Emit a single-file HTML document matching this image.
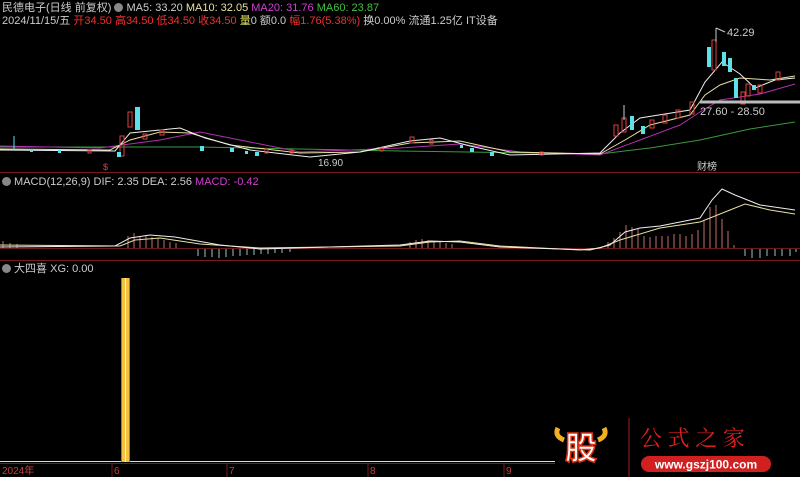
<!DOCTYPE html>
<html><head><meta charset="utf-8"><style>
body{margin:0;background:#000;width:800px;height:477px;overflow:hidden;font-family:"Liberation Sans","Noto Sans CJK SC",sans-serif;}
.t{position:absolute;font-size:11px;white-space:nowrap;color:#ccc;line-height:12px}
</style></head><body>
<div class="t" style="left:2px;top:2px">民德电子(日线 前复权) <span style="display:inline-block;width:9px;height:9px;border-radius:50%;background:#888;vertical-align:-1px"></span> MA5: 33.20 <span style="color:#e8e0a0">MA10: 32.05</span> <span style="color:#d040d0">MA20: 31.76</span> <span style="color:#40c040">MA60: 23.87</span></div>
<div class="t" style="left:2px;top:15px">2024/11/15/五 <span style="color:#f03030">开34.50 高34.50 低34.50 收34.50</span> <span style="color:#e0e060">量</span>0 额0.0 <span style="color:#f03030">幅1.76(5.38%)</span> 换0.00% 流通1.25亿 IT设备</div>
<div class="t" style="left:2px;top:176px"><span style="display:inline-block;width:9px;height:9px;border-radius:50%;background:#888;vertical-align:-1px"></span> MACD(12,26,9) DIF: 2.35 DEA: 2.56 <span style="color:#d040d0">MACD: -0.42</span></div>
<div class="t" style="left:2px;top:263px"><span style="display:inline-block;width:9px;height:9px;border-radius:50%;background:#888;vertical-align:-1px"></span> 大四喜 XG: 0.00</div>
<svg width="800" height="477" style="position:absolute;left:0;top:0">
<line x1="0" y1="172.5" x2="800" y2="172.5" stroke="#7a1a1a"/>
<line x1="0" y1="260.5" x2="800" y2="260.5" stroke="#7a1a1a"/>
<line x1="0" y1="463.5" x2="555" y2="463.5" stroke="#7a1a1a"/>
<line x1="0" y1="461.5" x2="555" y2="461.5" stroke="#ddd"/>
<polyline fill="none" stroke="#3a9a3a" stroke-width="1" points="0,147 200,147 400,151 600,154 650,148 700,140 750,129 795,122"/>
<polyline fill="none" stroke="#b030b0" stroke-width="1" points="0,146 100,148 160,140 200,132 250,142 300,152 400,148 460,144 520,152 600,155 640,140 680,125 700,112 720,100 760,94 795,84"/>
<polyline fill="none" stroke="#e8e0a0" stroke-width="1" points="0,149 110,150 130,140 160,132 190,133 230,145 300,153 360,152 410,143 460,141 510,152 600,154 625,140 650,125 690,115 705,95 720,85 740,78 770,80 795,76"/>
<polyline fill="none" stroke="#eee" stroke-width="1" points="0,150 115,151 130,133 160,130 180,128 205,138 250,150 310,157 360,152 410,141 440,138 470,146 510,155 600,153 620,133 640,118 665,114 690,110 705,82 722,62 740,74 755,88 775,80 795,78"/>
<g stroke="#e04040" fill="none">
<rect x="120" y="136" width="4" height="20"/><rect x="128" y="112" width="4" height="15"/><rect x="614" y="125" width="4" height="11"/><rect x="622" y="118" width="4" height="14"/><rect x="650" y="120" width="4" height="8"/><rect x="663" y="115" width="4" height="8"/><rect x="676" y="110" width="4" height="8"/><rect x="690" y="102" width="4" height="12"/><rect x="712" y="40" width="4" height="30"/><rect x="741" y="92" width="4" height="12"/><rect x="746" y="84" width="4" height="12"/><rect x="758" y="85" width="4" height="8"/><rect x="776" y="72" width="4" height="8"/><rect x="143" y="134" width="4" height="5"/><rect x="160" y="130" width="4" height="5"/><rect x="410" y="137" width="4" height="6"/>
<rect x="88" y="150" width="3" height="3"/><rect x="265" y="149" width="3" height="4"/><rect x="290" y="150" width="3" height="3"/><rect x="380" y="148" width="3" height="3"/><rect x="430" y="140" width="3" height="4"/><rect x="540" y="152" width="3" height="3"/>
</g>
<g fill="#5ee0e8">
<rect x="135" y="107" width="5" height="23"/><rect x="630" y="116" width="4" height="14"/><rect x="641" y="126" width="4" height="8"/><rect x="707" y="47" width="4" height="20"/><rect x="722" y="52" width="4" height="14"/><rect x="728" y="58" width="4" height="14"/><rect x="734" y="78" width="4" height="20"/><rect x="752" y="85" width="4" height="5"/><rect x="117" y="152" width="4" height="5"/><rect x="200" y="146" width="4" height="5"/><rect x="230" y="148" width="4" height="4"/><rect x="255" y="152" width="4" height="4"/><rect x="470" y="148" width="4" height="4"/><rect x="490" y="152" width="4" height="4"/>
<rect x="30" y="149" width="3" height="3"/><rect x="58" y="150" width="3" height="3"/><rect x="245" y="151" width="3" height="3"/><rect x="460" y="145" width="3" height="3"/>
</g>
<line x1="14" y1="136" x2="14" y2="150" stroke="#5ee0e8"/>
<line x1="624" y1="105" x2="624" y2="120" stroke="#ccc"/>
<line x1="716" y1="28" x2="716" y2="42" stroke="#ccc"/>
<line x1="716" y1="28" x2="725" y2="32" stroke="#ccc"/>
<text x="727" y="36" fill="#ccc" font-size="11" font-family="Liberation Sans">42.29</text>
<line x1="700" y1="102" x2="800" y2="102" stroke="#bbb" stroke-width="3"/>
<text x="700" y="115" fill="#ccc" font-size="11" font-family="Liberation Sans">27.60 - 28.50</text>
<text x="318" y="166" fill="#ccc" font-size="10" font-family="Liberation Sans">16.90</text>
<text x="697" y="170" fill="#ccc" font-size="10" font-family="Noto Sans CJK SC">财榜</text>
<text x="103" y="170" fill="#e04040" font-size="9" font-family="Liberation Sans">$</text>
<line x1="0" y1="248.5" x2="800" y2="248.5" stroke="#6a1a1a"/>
<g stroke="#c07070">
<path d="M3 248V241M10 248V243M17 248V244M128 248V236M134 248V233M140 248V236M146 248V235M152 248V237M158 248V238M164 248V240M170 248V242M176 248V243M410 248V242M416 248V240M422 248V239M428 248V240M434 248V241M440 248V242M446 248V243M452 248V244M608 248V242M614 248V238M620 248V232M626 248V225M632 248V227M638 248V229M644 248V236M650 248V237M656 248V236M662 248V236M668 248V236M674 248V234M680 248V234M686 248V236M692 248V234M698 248V230M704 248V220M710 248V207M716 248V205M722 248V219M728 248V231M734 248V245"/>
</g>
<g stroke="#8fc8c8">
<path d="M198 249V256M205 249V257M212 249V257M219 249V258M226 249V257M233 249V256M240 249V256M247 249V255M254 249V255M261 249V254M268 249V254M275 249V253M282 249V253M290 249V252M745 249V256M752 249V258M760 249V258M767 249V256M775 249V256M782 249V256M790 249V256M796 249V252"/>
</g>
<polyline fill="none" stroke="#e8e0a0" points="0,245 120,246 135,240 160,238 200,244 260,248 400,246 430,242 460,241 500,246 580,250 600,248 620,240 660,228 700,222 730,210 745,204 770,210 795,214"/>
<polyline fill="none" stroke="#eee" points="0,247 115,246 130,238 150,235 175,237 220,245 260,249 400,245 430,241 460,242 500,247 590,250 610,245 625,232 640,228 660,226 690,220 700,218 712,200 722,189 735,195 760,205 795,210"/>
<rect x="121" y="278" width="9" height="184" fill="#f2c240"/>
<line x1="121.5" y1="278" x2="121.5" y2="462" stroke="#b07a10"/>
<line x1="129.5" y1="278" x2="129.5" y2="462" stroke="#b07a10"/>
<line x1="125.5" y1="278" x2="125.5" y2="462" stroke="#fff6b0"/>
<g fill="#c04040" font-size="10" font-family="Liberation Sans,Noto Sans CJK SC">
<text x="2" y="474">2024年</text><text x="114" y="474">6</text><text x="229" y="474">7</text><text x="370" y="474">8</text><text x="506" y="474">9</text>
</g>
<g stroke="#7a1a1a"><path d="M112 463v14M227 463v14M368 463v14M504 463v14"/></g>
<path d="M558 428 q-4 8 6 12 M604 428 q4 8 -6 12" stroke="#f0b020" stroke-width="5" fill="none"/>
<text x="565" y="459" fill="#fff" stroke="#e03010" stroke-width="1.5" font-size="32" font-weight="bold" font-family="Noto Sans CJK SC">股</text>
<line x1="629" y1="418" x2="629" y2="477" stroke="#a02020"/>
<text x="640" y="446" fill="#e02020" font-size="22" font-family="Noto Serif CJK SC">公 式 之 家</text>
<rect x="641" y="456" width="130" height="16" rx="8" fill="#d02020"/>
<text x="706" y="468.5" fill="#fff" font-size="12" font-weight="bold" text-anchor="middle" font-family="Liberation Sans">www.gszj100.com</text>
</svg>
</body></html>
